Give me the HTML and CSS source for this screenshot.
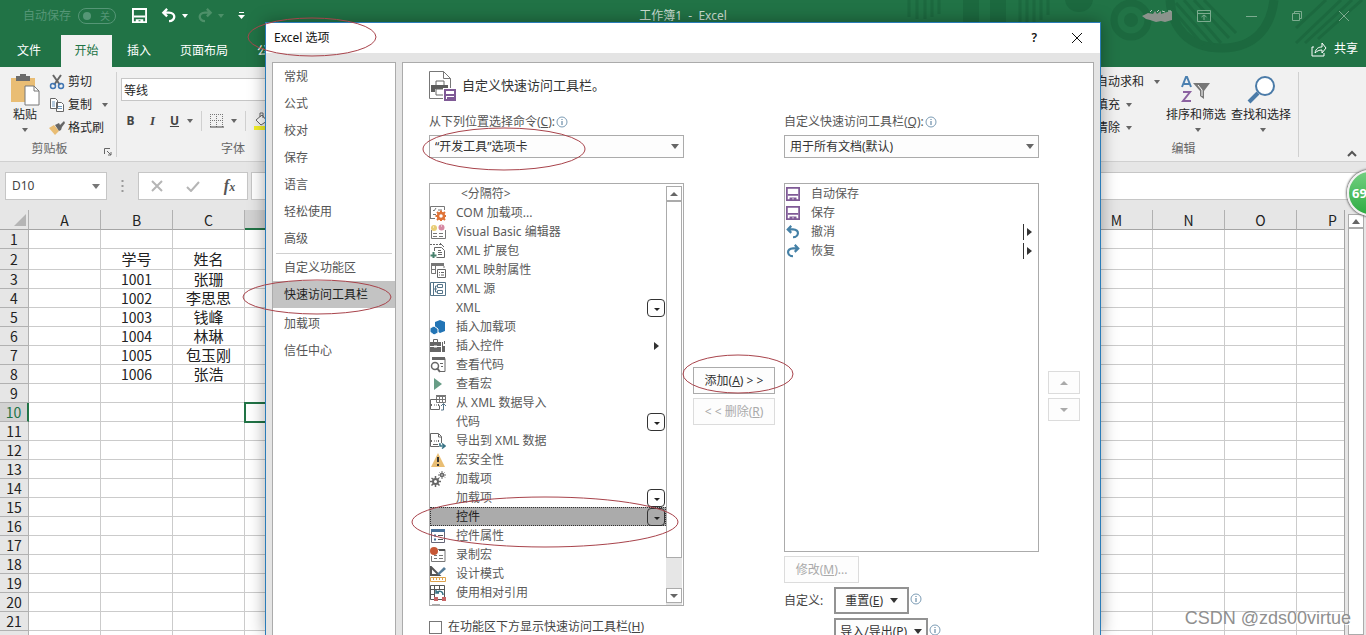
FILE: index.html
```html
<!DOCTYPE html>
<html lang="zh-CN">
<head>
<meta charset="utf-8">
<title>工作簿1 - Excel</title>
<link rel="stylesheet" href="styles.css">
</head>
<body>
<svg class="defs" aria-hidden="true">
  <symbol id="floppy" viewBox="0 0 16 16"><path d="M1 1h14v14H1z" fill="none" stroke="currentColor" stroke-width="2"/><path d="M2 8h12v2H2zM4 12h8v3h-3v-2H7v2H4z" fill="currentColor"/></symbol>
  <symbol id="undo" viewBox="0 0 16 16"><path d="M6 1L2 5l4 4M2 5h6c8 0 7 9 0 9" fill="none" stroke="currentColor" stroke-width="2.500"/></symbol>
  <symbol id="redo" viewBox="0 0 16 16"><path d="M10 1l4 4-4 4M14 5H8c-8 0-7 9 0 9" fill="none" stroke="currentColor" stroke-width="2.500"/></symbol>
  <symbol id="info" viewBox="0 0 12 12"><circle cx="6" cy="6" r="5" fill="#fff" stroke="#7c9cb5"/><path d="M6 5v4M6 3v1" stroke="#4a7596"/></symbol>
</svg>
<div class="app">
  <header class="topbar">
    <svg class="pattern" width="466" height="67" viewBox="900 0 466 67" aria-hidden="true">
      <g fill="none" stroke="#1c693f">
        <path d="M909 0v17M917 0v19M925 0v19M932 0v17M939 0v14M1020 0v22M1027 0v22M1034 0v22M1041 0v20M1048 0v15" stroke-width="3"/>
        <path d="M971 0v22M998 0v22" stroke-width="16"/>
        <circle cx="1131" cy="20" r="17" stroke-width="7"/>
        <path d="M1170 0c2 28 18 48 52 48s49-22 52-48" stroke-width="9"/>
        <path d="M1172 9l31 36M1176 3l37 42M1184 0l37 43M1194 0l35 38M1204 0l32 33" stroke-width="3"/>
        <path d="M1296 43l45-43M1305 43l47-43M1318 39l44-39M1296 28l30-28" stroke-width="3"/>
      </g>
      <g fill="#1c693f"><path d="M1065 0h28c-2 16-26 16-28 0z"/><circle cx="1131" cy="20" r="7"/></g>
    </svg>
    <div class="titlebar">
      <div class="quick">
        <span class="autosave">自动保存</span>
        <button class="toggle" aria-label="自动保存"><i></i><span>关</span></button>
        <button class="qa qa-save" aria-label="保存"><svg width="15" height="15"><use href="#floppy"/></svg></button>
        <button class="qa" aria-label="撤消"><svg width="16" height="15"><use href="#undo"/></svg><i class="caret"></i></button>
        <button class="qa dim" aria-label="恢复"><svg width="16" height="15"><use href="#redo"/></svg><i class="caret"></i></button>
        <button class="qa" aria-label="自定义快速访问工具栏"><svg width="7" height="9" viewBox="0 0 7 9"><path d="M1 1.500h5" stroke="#fff"/><path d="M0 4h7L3.500 8z" fill="#fff"/></svg></button>
      </div>
      <div class="doc">工作簿1 &nbsp;-&nbsp; Excel</div>
      <div class="winctl">
        <svg class="scribble" width="30" height="14" viewBox="0 0 30 14"><path d="M0 7l6-3 5 1 2-3 2 3 4-3v3l6-2 5-1v9l-7 2-4-1-5 1-6-2-4-1z" fill="#8b938c"/><path d="M8 3l2-2M15 3l2-2M20 2l3 1M26 2h3" stroke="#b9c9be"/></svg>
        <button aria-label="功能区显示选项"><svg width="14" height="12" viewBox="0 0 14 12"><path d="M.500.500h13v11H.500zM1 3.500h12M7 10V5M4.500 7L7 5l2.500 2" fill="none" stroke="currentColor"/></svg></button>
        <button aria-label="最小化"><svg width="11" height="12" viewBox="0 0 11 12"><path d="M0 6.500h11" stroke="currentColor"/></svg></button>
        <button aria-label="还原"><svg width="11" height="12" viewBox="0 0 11 12"><path d="M.500 3.500h7v7h-7zM2.500 3V1.500h7v7H8" fill="none" stroke="currentColor"/></svg></button>
        <button aria-label="关闭"><svg width="12" height="12" viewBox="0 0 12 12"><path d="M1 1l10 10M11 1L1 11" stroke="currentColor"/></svg></button>
      </div>
    </div>
    <nav class="tabs">
      <button class="tab">文件</button><button class="tab active">开始</button><button class="tab">插入</button><button class="tab wide">页面布局</button><button class="tab">公式</button>
      <button class="share"><svg width="16" height="15" viewBox="0 0 16 15"><path d="M3 5H1v9h12v-3M4 11c1-5 4-6 7-6V1l4 5-4 5V8C8 8 6 9 4 11z" fill="none" stroke="#fff"/></svg>共享</button>
    </nav>
  </header>

  <section class="ribbon">
    <div class="group clip">
      <div class="clip-main">
        <button class="paste"><svg width="30" height="32" viewBox="0 0 30 32"><path d="M1 4h24v24H1z" fill="#e9bd74"/><path d="M6 2h4V0h6v2h4v5H6z" fill="#6c6c6c"/><path d="M15 12h9l5 5v14H15z" fill="#fff" stroke="#777"/><path d="M24 12v5h5" fill="none" stroke="#777"/></svg><span>粘贴</span><i class="caret"></i></button>
        <div class="clip-list">
          <button><svg width="16" height="16" viewBox="0 0 16 16"><path d="M4 1l7 10M12 1L5 11" stroke="#666" stroke-width="2"/><circle cx="4" cy="12" r="2.500" fill="none" stroke="#4076b4" stroke-width="1.500"/><circle cx="12" cy="12" r="2.500" fill="none" stroke="#4076b4" stroke-width="1.500"/></svg>剪切</button>
          <button><svg width="16" height="16" viewBox="0 0 16 16"><path d="M1.500 1.500h5l2 2v8h-7zM7.500 5.500h5l2 2v7h-7z" fill="#fff" stroke="#666"/><path d="M3 5h3M3 7h3M3 9h3M9 9.500h4M9 11.500h4" stroke="#6f98bd"/></svg>复制<i class="caret"></i></button>
          <button><svg width="16" height="16" viewBox="0 0 16 16"><path d="M0 8l5-3 5 6-4 4z" fill="#e9bd74"/><path d="M6 5l4-2 1 2 4-4 1 2-3 4-1 3-2 1z" fill="#666"/></svg>格式刷</button>
        </div>
      </div>
      <div class="group-label">剪贴板</div>
      <svg class="launcher" width="8" height="8" viewBox="0 0 8 8"><path d="M.500 6V.500H6M3 3l4 4M7 4v3H4" fill="none" stroke="#666"/></svg>
    </div>
    <div class="group font">
      <input class="fontname" aria-label="字体" value="等线">
      <div class="format">
        <button class="bold">B</button><button class="ital">I</button><button class="und">U</button><i class="caret"></i><i class="sep"></i>
        <svg width="14" height="14" viewBox="0 0 14 14"><path d="M.500 0v14M6.500 0v14M12.500 0v14M0 .500h14M0 6.500h14" stroke="#777" stroke-dasharray="1 1"/><path d="M0 13h14" stroke="#444" stroke-width="1"/></svg><i class="caret"></i><i class="sep"></i>
        <svg width="16" height="18" viewBox="0 0 16 18"><path d="M2 8l6-5 5 6-6 4zM6 5V1h3v5" fill="#fff" stroke="#666"/><path d="M0 14h16v4H0z" fill="#f4f02a"/></svg>
      </div>
      <div class="group-label">字体</div>
    </div>
    <div class="group edit">
      <div class="edit-main">
        <div class="edit-list"><button>自动求和<i class="caret far"></i></button><button>填充<i class="caret"></i></button><button>清除<i class="caret"></i></button></div>
        <button class="big"><svg width="30" height="30" viewBox="0 0 30 30"><path d="M1 12L5 2h1l4 10M3 9h6" fill="none" stroke="#4b80b0" stroke-width="2"/><path d="M2 17h7L2 26h8" fill="none" stroke="#8b62a0" stroke-width="2"/><path d="M12 8h17l-6 8v8l-4-3v-5z" fill="#777"/><path d="M17 10l4 5v6" fill="none" stroke="#fff"/></svg><span>排序和筛选</span><i class="caret"></i></button>
        <button class="big"><svg width="30" height="30" viewBox="0 0 30 30"><circle cx="19" cy="11" r="9" fill="#fff" stroke="#4b7ba8" stroke-width="2"/><path d="M12 18l-9 9" stroke="#4b7ba8" stroke-width="4"/></svg><span>查找和选择</span><i class="caret"></i></button>
      </div>
      <div class="group-label">编辑</div>
    </div>
    <button class="collapse" aria-label="折叠功能区"><svg width="10" height="7" viewBox="0 0 10 7"><path d="M1 6l4-4 4 4" fill="none" stroke="#555" stroke-width="2"/></svg></button>
  </section>

  <section class="formula">
    <div class="namebox"><input aria-label="名称框" value="D10"><i class="caret"></i></div>
    <svg width="3" height="14" viewBox="0 0 3 14"><path d="M1.500 1v12" stroke="#999" stroke-width="2" stroke-dasharray="2 3"/></svg>
    <div class="fx">
      <button aria-label="取消"><svg width="12" height="12" viewBox="0 0 12 12"><path d="M1 1l10 10M11 1L1 11" stroke="#b5b5b5" stroke-width="2"/></svg></button>
      <button aria-label="输入"><svg width="14" height="12" viewBox="0 0 14 12"><path d="M1 7l4 4 8-9" fill="none" stroke="#b5b5b5" stroke-width="2"/></svg></button>
      <button class="fxb" aria-label="插入函数">f<small>x</small></button>
    </div>
    <input class="formula-input" aria-label="编辑栏">
  </section>

  <main class="sheet">
    <div class="gridwrap"><table class="grid" id="grid"></table></div>
    <div class="vscroll"><button aria-label="向上滚动"><i class="caret up"></i></button><div></div></div>
  </main>
  <div class="ball">69</div>

  <div class="dialog" role="dialog" aria-label="Excel 选项">
    <div class="dlg-title"><span>Excel 选项</span><button aria-label="帮助">?</button><button aria-label="关闭"><svg width="12" height="12" viewBox="0 0 12 12"><path d="M1 1l10 10M11 1L1 11" stroke="#111"/></svg></button></div>
    <div class="dlg-body">
      <nav class="side">
        <button>常规</button><button>公式</button><button>校对</button><button>保存</button><button>语言</button><button>轻松使用</button><button>高级</button>
        <hr>
        <button>自定义功能区</button><button class="current">快速访问工具栏</button>
        <button class="after">加载项</button><button>信任中心</button>
      </nav>
      <section class="pane">
        <h1><svg width="28" height="31" viewBox="0 0 28 31"><path d="M.500.500h14l7 7v20H.500z" fill="#fff" stroke="#777"/><path d="M14.500.500v7h7" fill="none" stroke="#777"/><path d="M7 10h8v5H7z" fill="#fff" stroke="#666"/><path d="M2 14h17v7h-3v-3H6v3H2z" fill="#5c5c5c"/><path d="M7 18h8v6H7z" fill="#fff" stroke="#666"/><path d="M14 17h14v14H14z" fill="#fff"/><path d="M16 19h10v10H16z" fill="none" stroke="#7f5a96" stroke-width="2"/><path d="M16 23h10v2H16zM18 26h7v3h-3v-1h-1v1h-3z" fill="#7f5a96"/></svg>自定义快速访问工具栏。</h1>
        <div class="cols">
          <div class="col">
            <div class="lab"><label for="src">从下列位置选择命令(<u>C</u>):</label><svg width="12" height="12"><use href="#info"/></svg></div>
            <div class="sel"><select id="src"><option>“开发工具”选项卡</option></select><i class="caret"></i></div>
            <div class="list source">
              <ul>
                <li class="sepitem"><span>&lt;分隔符&gt;</span></li>
                <li><svg viewBox="0 0 16 16"><path d="M.500 14V1.500h14V5M.500 13.500H5M3 5l1 1 2-3M8 5h4" fill="none" stroke="#777"/><path d="M3 9.500h3" stroke="#777"/><circle cx="11" cy="11" r="3" fill="none" stroke="#df7337" stroke-width="2.500"/><path d="M11 5.500v2M11 14.500v1.500M5.500 11h2M14.500 11H16M7 7l1.500 1.500M13.500 13.500L15 15M15 7l-1.500 1.500M7 15l1.500-1.500" stroke="#df7337" stroke-width="2"/></svg><span>COM 加载项...</span></li>
                <li><svg viewBox="0 0 16 16"><path d="M1.500 6v8.500h14V6M3 9.500h4M9 9.500h4M3 12.500h4M9 12.500h4" fill="none" stroke="#777"/><circle cx="4" cy="4" r="3" fill="#e8cd75"/><circle cx="11.500" cy="3.500" r="3" fill="#d689a3"/><path d="M3 3h1M11 2h1" stroke="#fff"/></svg><span>Visual Basic 编辑器</span></li>
                <li><svg viewBox="0 0 16 16"><path d="M0 1.500h2M3 1.500h2M6 1.500h2M9 1.500h2M4.500 8V4.500h7l3 3v7h-8M8 7.500h3M8 9.500h4M8 11.500h4" fill="none" stroke="#666"/><path d="M10 0l4 4" stroke="#666"/><path d="M3.500 9v6M.500 12.500h6" stroke="#47806c" stroke-width="2"/></svg><span>XML 扩展包</span></li>
                <li><svg viewBox="0 0 16 16"><path d="M1 1h13v3H1z" fill="#777"/><path d="M1.500 3v8.500H6M5.500 4v8M14 4v2M2 7.500h4" fill="none" stroke="#777"/><path d="M7.500 7.500h8v8h-8zM9 10.500h1M11 10.500h3M9 13h1M11 13h3" fill="#fff" stroke="#666"/></svg><span>XML 映射属性</span></li>
                <li><svg viewBox="0 0 16 16"><path d="M.500 1.500h15v13H.500zM3.500 2v12M4 8h3M7.500 3.500h5v3h-5zM7.500 9.500h5v3h-5zM5.500 5H7M5.500 5v6H7" fill="none" stroke="#54758a"/></svg><span>XML 源</span></li>
                <li class="drop"><span>XML</span></li>
                <li><svg viewBox="0 0 16 16"><path d="M5 3l5-2 5 2v9l-5 2-5-3z" fill="#2274b5"/><path d="M0 9l4-2 4 3v4l-4 2-4-3z" fill="#2274b5" stroke="#fff"/></svg><span>插入加载项</span></li>
                <li class="flyout"><svg viewBox="0 0 16 16"><path d="M0 4h11v4H0zM0 9h11v5H0z" fill="#666"/><path d="M3.500 4V1.500h4V4M12.500 4v5M14.500 3v3" fill="none" stroke="#666"/><path d="M12 8h3v6h-3z" fill="#666"/><path d="M4 8.500h3" stroke="#fff" stroke-width="2"/></svg><span>插入控件</span></li>
                <li><svg viewBox="0 0 16 16"><path d="M2 1.500h13v13H9M10 6.500h3M11 9.500h2" fill="none" stroke="#666"/><path d="M2 0h13v3H2z" fill="#666"/><circle cx="5" cy="9" r="3.500" fill="#fff" stroke="#666" stroke-width="1.500"/><path d="M7 11l3 4" stroke="#666" stroke-width="2"/></svg><span>查看代码</span></li>
                <li><svg viewBox="0 0 16 16"><path d="M4 2l8 6-8 6z" fill="#689d86"/></svg><span>查看宏</span></li>
                <li><svg viewBox="0 0 16 16"><path d="M6.500 1.500h9v6h-9zM7 4.500h8M9.500 2v5M12.500 2v5" fill="none" stroke="#777"/><path d="M6 .500h10" stroke="#777" stroke-width="2"/><path d="M8 4.500H.500v10h9v-4M2 9l-1 1 1 1M4 10h1M6 10h1M8 9l1 1-1 1" fill="none" stroke="#666"/><path d="M11 15h2.500V9M11 11l2.500-2.500L16 11" fill="none" stroke="#54758a"/></svg><span>从 XML 数据导入</span></li>
                <li class="drop"><span>代码</span></li>
                <li><svg viewBox="0 0 16 16"><path d="M9 13.500H.500v-13h8l3 3V10M8.500 1v3h3M2 7l-1 1 1 1M4 8h1M6 8h1M8 7l1 1-1 1M3 11.500h5" fill="none" stroke="#666"/><path d="M9 11h1v2h4M12 10.500l3 2.500-3 2.500" fill="none" stroke="#397486" stroke-width="1.500"/></svg><span>导出到 XML 数据</span></li>
                <li><svg viewBox="0 0 16 16"><path d="M8 1l7 14H1z" fill="#e9be74"/><path d="M8 5v5M8 12v2" stroke="#333" stroke-width="2"/></svg><span>宏安全性</span></li>
                <li><svg viewBox="0 0 16 16"><g fill="none" stroke="#666"><circle cx="5.500" cy="10.500" r="2.500" stroke-width="2"/><path d="M5.500 5v2.500M5.500 13.500V16M0 10.500h2.500M8.500 10.500H11M1.500 7l2 1.500M7.500 12.500l2 2M9 7L7.500 8.500M3.500 12.500l-2 2" stroke-width="1.500"/><circle cx="12" cy="4" r="1.500" stroke-width="1.500"/><path d="M12 0v2M12 6v2M8 4h2M14 4h2M9.500 1.500l1 1M14 5.500l1 1M14.500 1.500l-1 1M10.500 5.500l-1 1"/></g></svg><span>加载项</span></li>
                <li class="drop"><span>加载项</span></li>
                <li class="drop picked"><span>控件</span></li>
                <li><svg viewBox="0 0 16 16"><path d="M1.500 1.500h13v13h-13z" fill="#fff" stroke="#667"/><path d="M1 1h14v3H1z" fill="#47719a"/><path d="M4 7.500h2M4 11.500h2" stroke="#47719a" stroke-width="2"/><path d="M8 7.500h5M8 11.500h5" stroke="#555"/></svg><span>控件属性</span></li>
                <li><svg viewBox="0 0 16 16"><path d="M8 2.500h7v12H1.500V9M4 8.500h3M9 8.500h4M4 11.500h3M9 11.500h4" fill="none" stroke="#777"/><path d="M9 2h6v2H9z" fill="#555"/><circle cx="4" cy="4" r="4" fill="#c75836"/></svg><span>录制宏</span></li>
                <li><svg viewBox="0 0 16 16"><path d="M1 1v8h8z" fill="none" stroke="#555" stroke-width="2"/><path d="M7 8l7-7 2 2-7 6z" fill="#567c99"/><path d="M.500 11.500h15v4H.500zM3.500 12v2M6.500 12v2M9.500 12v2M12.500 12v2" fill="#fff" stroke="#dda24c"/></svg><span>设计模式</span></li>
                <li><svg viewBox="0 0 16 16"><path d="M.500.500h14v14H.500zM.500 4.500h14M4.500 0v15M9.500 0v4M1 9.500h3" fill="#fff" stroke="#555"/><path d="M6 8c3-3 7-2 7 2M6 5v3h3" fill="none" stroke="#397486" stroke-width="1.500"/><path d="M4 12h4v4H4zM12 12h4v4h-4z" fill="#c76565"/></svg><span>使用相对引用</span></li>
                <li><svg viewBox="0 0 16 16"><path d="M2 1.500h8M2.500 1v14" fill="none" stroke="#555" stroke-width="2"/></svg></li>
              </ul>
              <div class="bar"><button aria-label="上"><i class="caret up"></i></button><div class="thumb"></div><button aria-label="下"><i class="caret"></i></button></div>
            </div>
            <label class="check"><input type="checkbox"><span>在功能区下方显示快速访问工具栏(<u>H</u>)</span></label>
          </div>
          <div class="mid"><button class="btn">添加(<u>A</u>) &gt; &gt;</button><button class="btn" disabled>&lt; &lt; 删除(<u>R</u>)</button></div>
          <div class="col">
            <div class="lab"><label for="dst">自定义快速访问工具栏(<u>Q</u>):</label><svg width="12" height="12"><use href="#info"/></svg></div>
            <div class="sel"><select id="dst"><option>用于所有文档(默认)</option></select><i class="caret"></i></div>
            <div class="list target">
              <ul>
                <li class="purple"><svg><use href="#floppy"/></svg><span>自动保存</span></li>
                <li class="purple"><svg><use href="#floppy"/></svg><span>保存</span></li>
                <li class="blue split"><svg><use href="#undo"/></svg><span>撤消</span></li>
                <li class="blue split"><svg><use href="#redo"/></svg><span>恢复</span></li>
              </ul>
            </div>
            <button class="btn modify" disabled>修改(<u>M</u>)...</button>
            <div class="custom"><span>自定义:</span><div>
              <div class="line"><button class="btn strong"><span>重置(<u>E</u>)</span><i class="caret"></i></button><svg width="12" height="12"><use href="#info"/></svg></div>
              <div class="line"><button class="btn strong"><span>导入/导出(<u>P</u>)</span><i class="caret"></i></button><svg width="12" height="12"><use href="#info"/></svg></div>
            </div></div>
          </div>
          <div class="order"><button class="btn" disabled aria-label="上移"><i class="caret up"></i></button><button class="btn" disabled aria-label="下移"><i class="caret"></i></button></div>
        </div>
      </section>
    </div>
  </div>

  <svg class="marks" aria-hidden="true"><g fill="none" stroke="#a8434b"><ellipse cx="312" cy="37" rx="64" ry="19"/><ellipse cx="504" cy="149" rx="81" ry="21"/><ellipse cx="317" cy="297" rx="74" ry="17"/><ellipse cx="738" cy="374" rx="55" ry="19"/><ellipse cx="545" cy="522" rx="133" ry="25"/></g></svg>
  <div class="watermark">CSDN @zds00virtue</div>
</div>
<script src="grid.js"></script>
</body>
</html>
```

FILE: styles.css
```css
* { box-sizing: border-box; }
body { margin: 0; font: 12px/18px "Noto Sans", "Noto Sans CJK SC", sans-serif; color: #444; }
button { font: inherit; color: inherit; background: none; border: 0; padding: 0; margin: 0; white-space: nowrap; }
input, select { font: inherit; color: inherit; }
svg { display: block; flex: none; }
ul { list-style: none; margin: 0; padding: 0; }
.defs { position: absolute; width: 0; height: 0; }
.app { position: relative; height: 100vh; overflow: hidden; display: flex; flex-direction: column; background: #e6e6e6; }
.caret { flex: none; width: 0; height: 0; border: 3px solid transparent; border-top: 4px solid currentColor; border-bottom: 0; }
.caret.up { border-top: 0; border-bottom: 4px solid currentColor; }

.topbar { position: relative; flex: none; background: #217346; color: #fff; }
.pattern { position: absolute; right: 0; top: 0; }
.titlebar { position: relative; display: grid; grid-template-columns: 1fr auto 1fr; align-items: center; height: 35px; padding: 0 16px 4px; }
.quick, .winctl { display: flex; align-items: center; }
.quick { padding-left: 7px; }
.autosave { color: #559676; }
.toggle { display: flex; align-items: center; justify-content: space-between; width: 38px; height: 16px; margin: 0 16px 0 7px; padding: 0 5px 0 4px; border: 1px solid #559676; border-radius: 8px; color: #559676; font-size: 10px; line-height: 14px; }
.toggle i { width: 8px; height: 8px; border-radius: 50%; background: #559676; }
.qa { display: flex; align-items: center; gap: 5px; margin-right: 9px; }
.qa-save { margin-right: 14px; }
.dim { color: #4d9069; margin-right: 14px; }
.doc { color: #cbded2; }
.winctl { justify-content: flex-end; gap: 35px; color: #7cab8f; }
.scribble { margin-right: -10px; }
.tabs { position: relative; display: flex; height: 32px; padding-left: 8px; }
.tab { width: 51px; margin-right: 2px; padding-right: 9px; }
.tab.active { padding: 0; margin-right: 6px; background: #f1f1f1; color: #217346; }
.tab.wide { width: 84px; padding: 0; }
.tab:nth-child(3) { width: 42px; padding: 0; }
.tab:nth-child(5) { padding: 0 0 0 9px; text-align: left; }
.share { display: flex; align-items: center; gap: 7px; margin: 0 8px 4px auto; }

.ribbon { flex: none; display: flex; height: 95px; background: #f1f1f1; border-bottom: 1px solid #d0d0d0; color: #262626; padding: 5px 9px 4px 0; }
.ribbon .caret { color: #666; }
.group { position: relative; display: flex; flex-direction: column; justify-content: space-between; border-right: 1px solid #d0d0d0; }
.group-label { text-align: center; color: #666; line-height: 16px; }
.clip { width: 117px; }
.clip .group-label { padding-right: 17px; }
.launcher { position: absolute; right: 4px; bottom: 1px; }
.clip-main, .edit-main { display: flex; }
.paste { display: flex; flex-direction: column; align-items: center; width: 41px; padding: 2px 0 0 9px; }
.paste .caret { margin-top: 4px; }
.clip-list { margin: 0 0 0 8px; }
.clip-list button { display: flex; align-items: center; gap: 3px; height: 23px; padding-bottom: 4px; }
.clip-list .caret { margin-left: 7px; }
.font { border: 0; flex: 1; max-width: 228px; padding: 6px 0 0 4px; }
.fontname { width: 100%; height: 23px; padding: 0 2px; border: 1px solid #c6c6c6; background: #fff; }
.format { display: flex; align-items: center; gap: 7px; height: 22px; color: #444; }
.format button { width: 15px; padding-left: 4px; text-align: center; }
.format .sep { margin: 0 1px; }
.bold, .und { font-weight: 700; }
.ital { font: italic 700 13px "Liberation Serif", serif; }
.und { text-decoration: underline; }
.sep { width: 1px; height: 20px; background: #d0d0d0; }
.edit { margin-left: auto; padding-right: 7px; }
.edit-list { width: 70px; }
.edit-list button { display: flex; align-items: center; gap: 6px; height: 23px; padding-bottom: 4px; }
.edit-list .far { margin-left: 4px; }
.big { display: flex; flex-direction: column; align-items: center; gap: 1px; width: 60px; margin-left: 5px; padding-top: 3px; }
.big:nth-child(2) { margin-left: 0; }
.big .caret { margin: 3px 0 0 4px; }
.edit .group-label { padding-right: 20px; }
.collapse { width: 58px; display: flex; justify-content: flex-end; align-items: flex-end; margin-left: 0; }

.formula { flex: none; display: flex; align-items: center; height: 48px; padding: 0 0 0 5px; }
.formula > svg { margin: 0 14px; }
.namebox, .fx { display: flex; align-items: center; height: 28px; border: 1px solid #c6c6c6; background: #fff; }
.namebox { width: 102px; padding: 0 6px; }
.namebox input { flex: 1; min-width: 0; border: 0; padding: 0; }
.namebox .caret { border-width: 5px 4px 0; color: #777; }
.fx { width: 110px; justify-content: space-around; margin-right: 3px; }
.fxb { font: italic 700 16px/20px "Liberation Serif", serif; color: #555; }
.fxb small { font-size: 12px; }
.formula-input { flex: 1; min-width: 0; height: 28px; border: 1px solid #c6c6c6; border-right: 0; background: #fff; }

.sheet { flex: 1; min-height: 0; display: flex; overflow: hidden; }
.gridwrap { flex: 1; min-width: 0; overflow: hidden; border-right: 1px solid #a5a5a5; }
.grid { width: 1369px; table-layout: fixed; border-collapse: separate; border-spacing: 0; background: #fff; color: #222; font: 15px/18px "Noto Sans CJK SC", sans-serif; }
.grid th, .grid td { height: 19px; padding: 0; border-right: 1px solid #cbcbcb; border-bottom: 1px solid #cbcbcb; text-align: center; white-space: nowrap; font-weight: 400; line-height: 18px; }
.grid th { background: #e6e6e6; border-color: #b1b1b1; font-size: 14px; }
.grid .tall td, .grid .tall th { height: 21px; }
.grid .num { font-size: 14px; }
.grid thead th { height: 20px; border-bottom-color: #a5a5a5; }
.grid thead .on { background: #d2d2d2; border-bottom: 2px solid #217346; }
.grid tbody .on { background: #d2d2d2; color: #217346; border-right: 2px solid #217346; }
.grid .cursor { outline: 2px solid #217346; outline-offset: -1px; }
.corner { display: block; width: 0; margin-left: 14px; border: 6px solid transparent; border-right-color: #b5b5b5; border-bottom-color: #b5b5b5; }
.vscroll { width: 21px; padding: 4px 2px 0 3px; display: flex; flex-direction: column; }
.vscroll button { display: flex; align-items: center; justify-content: center; height: 14px; border: 1px solid #ababab; background: #fff; color: #666; }
.vscroll .caret { border-width: 0 4px 5px; }
.vscroll div { flex: 1; background: #fff; border: 1px solid #ababab; }
.ball { position: absolute; right: -27px; top: 170px; width: 46px; height: 46px; padding-left: 3px; border: 2px solid #f2f2f2; border-radius: 50%; background: linear-gradient(#72cf80, #2fac43); box-shadow: 0 0 2px 1px #777; color: #fff; font: 700 13px/42px "Open Sans", sans-serif; }

.dialog { position: absolute; left: 265px; right: 265px; top: 22px; bottom: 0; display: flex; flex-direction: column; background: #e4e4e4; border: 1px solid #2b7cb8; border-bottom: 0; box-shadow: 0 0 16px rgba(0,0,0,.35); }
.dlg-title { flex: none; display: flex; align-items: center; height: 30px; background: #fff; color: #111; padding: 0 17px 0 8px; }
.dlg-title span { flex: 1; }
.dlg-title button { margin-left: 34px; font-weight: 600; }
.dlg-body { flex: 1; min-height: 0; display: flex; gap: 6px; padding: 9px 6px 0; }
.side { flex: none; width: 124px; background: #fff; border: 1px solid #ababab; border-bottom: 0; color: #555; }
.side button { display: block; width: 100%; height: 27px; padding-left: 11px; text-align: left; }
.side hr { height: 1px; margin: 1px 3px 0; border: 0; background: #d0d0d0; }
.side .current { background: #c3c3c3; color: #222; }
.side .after { margin-top: 2px; }
.pane { flex: 1; min-width: 0; overflow: hidden; background: #fff; border: 1px solid #ababab; border-bottom: 0; padding: 8px 0 0 26px; }
h1 { display: flex; align-items: flex-start; gap: 5px; margin: 0 0 11px; font-size: 13px; line-height: 28px; font-weight: 400; color: #333; }
.cols { display: grid; grid-template-columns: 255px 82px 255px 32px; gap: 9px; align-items: start; }
.lab { display: flex; align-items: center; gap: 1px; height: 22px; padding-bottom: 4px; color: #555; }
.sel { display: flex; align-items: center; height: 23px; border: 1px solid #ababab; background: #fdfdfd; padding-right: 4px; }
.sel select { flex: 1; min-width: 0; height: 21px; appearance: none; border: 0; background: none; padding: 0 5px; color: #333; }
.sel .caret { border-width: 5px 4px 0; color: #666; }
.list { display: flex; margin-top: 25px; border: 1px solid #ababab; overflow: hidden; color: #5a5a5a; }
.source { height: 423px; padding-right: 1px; }
.target { height: 369px; margin-bottom: 4px; }
.list ul { flex: 1; }
.list li { position: relative; display: flex; align-items: center; height: 19px; padding-left: 26px; }
.list li svg { position: absolute; left: 0; width: 16px; height: 16px; }
.list .sepitem { padding-left: 31px; }
.drop::before { content: ""; position: absolute; right: 1px; width: 16px; height: 16px; border: 1px solid #333; border-radius: 4px; }
.drop::after { content: ""; position: absolute; right: 6px; top: 10px; border: 3px solid transparent; border-top-color: #222; border-bottom: 0; }
.flyout::after, .split::after { content: ""; position: absolute; right: 7px; border: 4px solid transparent; border-left: 5px solid #333; border-right: 0; }
.split::before { content: ""; position: absolute; right: 14px; width: 1px; height: 16px; background: #333; }
.list .split::after { right: 6px; }
.list .picked { background: #ababab; color: #222; outline: 1px dotted #333; outline-offset: -1px; }
.target svg { padding: 1px; }
.purple svg { color: #7f5a96; }
.blue svg { color: #4480a6; }
.bar { flex: none; display: flex; flex-direction: column; width: 16px; margin-top: 2px; background: #e6e6e6; }
.bar button { display: flex; align-items: center; justify-content: center; height: 15px; border: 1px solid #ababab; background: #fff; color: #666; }
.bar .caret { border-left-width: 4px; border-right-width: 4px; }
.thumb { height: 357px; margin-bottom: auto; border: 1px solid #ababab; background: #fff; }
.bar button:last-child { margin-bottom: 2px; }
.check { display: flex; align-items: center; gap: 6px; height: 18px; margin-top: 12px; color: #444; }
.check input { appearance: none; width: 13px; height: 13px; margin: 0; border: 1px solid #777; background: #fff; }
.btn { height: 27px; border: 1px solid #ababab; background: #fdfdfd; color: #333; }
.btn:disabled { border-color: #dcdcdc; color: #aaa; }
.mid { display: grid; gap: 4px; padding-top: 254px; }
.order { display: grid; gap: 4px; padding-top: 258px; }
.order .btn { display: flex; align-items: center; justify-content: center; height: 23px; }
.order .caret { border-left-width: 4px; border-right-width: 4px; }
.modify { display: block; width: 75px; }
.custom { display: flex; gap: 11px; padding-top: 4px; line-height: 27px; }
.line { display: flex; gap: 1px; margin-bottom: 4px; }
.line svg { margin-top: 6px; }
.strong { display: flex; align-items: center; gap: 7px; padding: 0 9px; border: 2px solid #929292; }
.line:last-child .strong { padding: 0 4px; }
.strong .caret { border-width: 5px 4px 0; }

.marks { position: absolute; left: 0; top: 0; width: 100%; height: 100%; pointer-events: none; }
.watermark { position: absolute; right: 15px; bottom: 5px; font: 18px/24px "Liberation Sans", sans-serif; color: #8f8f8f; text-shadow: 1px 1px 0 #fff; }
```

FILE: grid.js
```js
const columns = "ABCDEFGHIJKLMNOP".split("");
const data = {
  2: ["学号", "姓名"], 3: ["1001", "张珊"], 4: ["1002", "李思思"], 5: ["1003", "钱峰"],
  6: ["1004", "林琳"], 7: ["1005", "包玉刚"], 8: ["1006", "张浩"]
};
const width = i => (i < 3 || i > 11 ? 72 : i === 3 ? 92 : 93);
let html = '<colgroup><col style="width:29px">' +
  columns.map((c, i) => `<col style="width:${width(i)}px">`).join("") + "</colgroup>";
html += '<thead><tr><th><i class="corner"></i></th>' +
  columns.map(c => `<th${c === "D" ? ' class="on"' : ""}>${c}</th>`).join("") + "</tr></thead><tbody>";
for (let r = 1; r <= 22; r++) {
  html += `<tr${r === 2 ? ' class="tall"' : ""}><th${r === 10 ? ' class="on"' : ""}>${r}</th>`;
  columns.forEach(c => {
    const row = data[r] || [];
    const text = c === "B" ? row[0] || "" : c === "C" ? row[1] || "" : "";
    const cls = r === 10 && c === "D" ? "cursor" : /^\d+$/.test(text) ? "num" : "";
    html += `<td${cls ? ` class="${cls}"` : ""}>${text}</td>`;
  });
  html += "</tr>";
}
document.getElementById("grid").innerHTML = html + "</tbody>";
```
